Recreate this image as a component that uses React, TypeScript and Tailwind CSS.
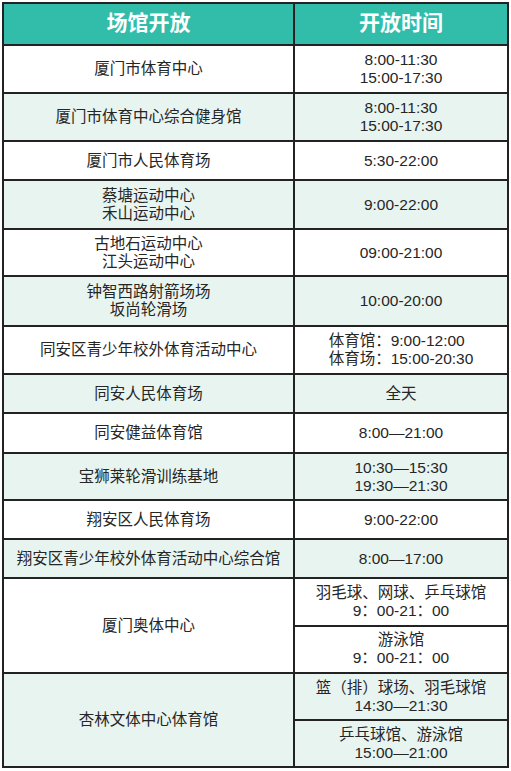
const ROWS: { name: string[]; time: string[][]; h: number; alt?: boolean; left?: boolean }[] = [
  { name: ["厦门市体育中心"], time: [["8:00-11:30", "15:00-17:30"]], h: 48 },
  { name: ["厦门市体育中心综合健身馆"], time: [["8:00-11:30", "15:00-17:30"]], h: 48, alt: true },
  { name: ["厦门市人民体育场"], time: [["5:30-22:00"]], h: 39 },
  { name: ["蔡塘运动中心", "禾山运动中心"], time: [["9:00-22:00"]], h: 49, alt: true },
  { name: ["古地石运动中心", "江头运动中心"], time: [["09:00-21:00"]], h: 47 },
  { name: ["钟智西路射箭场场", "坂尚轮滑场"], time: [["10:00-20:00"]], h: 50, alt: true },
  {
    name: ["同安区青少年校外体育活动中心"],
    time: [["体育馆：9:00-12:00", "体育场：15:00-20:30"]],
    h: 48,
    left: true,
  },
  { name: ["同安人民体育场"], time: [["全天"]], h: 39, alt: true },
  { name: ["同安健益体育馆"], time: [["8:00—21:00"]], h: 40 },
  { name: ["宝狮莱轮滑训练基地"], time: [["10:30—15:30", "19:30—21:30"]], h: 47, alt: true },
  { name: ["翔安区人民体育场"], time: [["9:00-22:00"]], h: 39 },
  { name: ["翔安区青少年校外体育活动中心综合馆"], time: [["8:00—17:00"]], h: 39, alt: true },
  {
    name: ["厦门奥体中心"],
    time: [
      ["羽毛球、网球、乒乓球馆", "9：00-21：00"],
      ["游泳馆", "9：00-21：00"],
    ],
    h: 95,
  },
  {
    name: ["杏林文体中心体育馆"],
    time: [
      ["篮（排）球场、羽毛球馆", "14:30—21:30"],
      ["乒乓球馆、游泳馆", "15:00—21:00"],
    ],
    h: 92,
    alt: true,
  },
];

const FONT = { fontFamily: '"Liberation Sans", "Noto Sans CJK SC", sans-serif' };

export default function App() {
  return (
    <div className="min-h-[771px] bg-white pt-[2px] pl-[2px]" style={FONT}>
      <div className="w-[507px] border-2 border-[#222] text-[15.5px] leading-[18px] text-[#262626]">
        <div className="flex h-[42px] border-b-2 border-[#222] bg-[#32bdab] text-[21px] font-bold text-white">
          <div className="flex w-[291px] items-center justify-center border-r-2 border-[#222] pb-[2px]">
            场馆开放
          </div>
          <div className="flex flex-1 items-center justify-center pb-[2px]">开放时间</div>
        </div>

        {ROWS.map((r, i) => {
          const last = i === ROWS.length - 1;
          return (
            <div
              key={i}
              className={`flex ${last ? "" : "border-b-2 border-[#222]"} ${r.alt ? "bg-[#e8f4f0]" : "bg-white"}`}
              style={{ height: r.h }}
            >
              <div className="flex w-[291px] flex-col items-center justify-center border-r-2 border-[#222] text-center">
                {r.name.map((n) => (
                  <div key={n}>{n}</div>
                ))}
              </div>
              <div className="flex flex-1 flex-col">
                {r.time.map((t, j) => (
                  <div
                    key={j}
                    className={`flex flex-1 flex-col items-center justify-center text-center ${
                      j < r.time.length - 1 ? "border-b-2 border-[#222]" : ""
                    }`}
                  >
                    <div className={r.left ? "text-left" : ""}>
                      {t.map((line) => (
                        <div key={line}>{line}</div>
                      ))}
                    </div>
                  </div>
                ))}
              </div>
            </div>
          );
        })}
      </div>
    </div>
  );
}
